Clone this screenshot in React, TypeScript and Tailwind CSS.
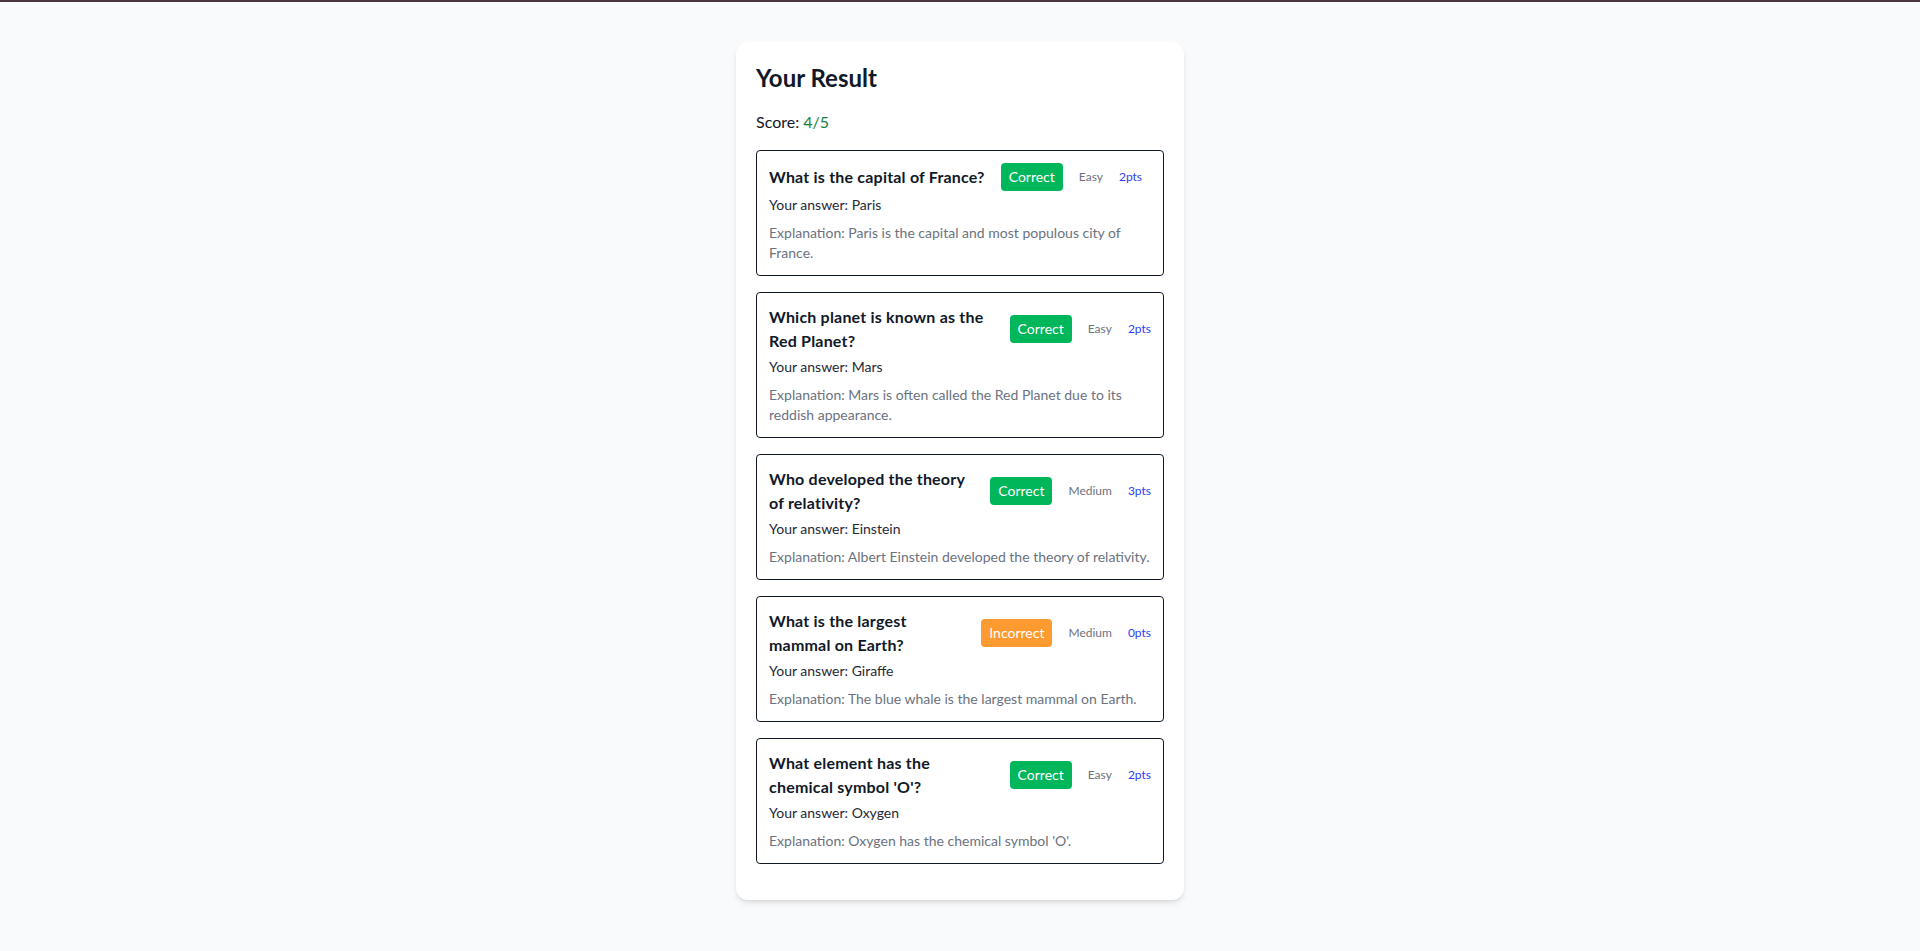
interface Result {
  question: string;
  answer: string;
  explanation: string;
  correct: boolean;
  difficulty: string;
  points: number;
}

const results: Result[] = [
  {
    question: 'What is the capital of France?',
    answer: 'Paris',
    explanation: 'Paris is the capital and most populous city of France.',
    correct: true,
    difficulty: 'Easy',
    points: 2,
  },
  {
    question: 'Which planet is known as the Red Planet?',
    answer: 'Mars',
    explanation: 'Mars is often called the Red Planet due to its reddish appearance.',
    correct: true,
    difficulty: 'Easy',
    points: 2,
  },
  {
    question: 'Who developed the theory of relativity?',
    answer: 'Einstein',
    explanation: 'Albert Einstein developed the theory of relativity.',
    correct: true,
    difficulty: 'Medium',
    points: 3,
  },
  {
    question: 'What is the largest mammal on Earth?',
    answer: 'Giraffe',
    explanation: 'The blue whale is the largest mammal on Earth.',
    correct: false,
    difficulty: 'Medium',
    points: 0,
  },
  {
    question: "What element has the chemical symbol 'O'?",
    answer: 'Oxygen',
    explanation: "Oxygen has the chemical symbol 'O'.",
    correct: true,
    difficulty: 'Easy',
    points: 2,
  },
];

const ResultItem = ({ item }: { item: Result }) => (
  <div className="mb-4 rounded border border-[#111827] p-3">
    <div className="flex items-center gap-4">
      <h3 className="text-base font-bold tracking-[0.2px] text-[#111827]">{item.question}</h3>
      <span
        className={`shrink-0 rounded px-2 py-1 text-sm leading-5 text-white ${
          item.correct ? 'bg-[#00b65b]' : 'bg-[#fd9a30]'
        }`}
      >
        {item.correct ? 'Correct' : 'Incorrect'}
      </span>
      <span className="shrink-0 text-xs text-[#6b7280]">{item.difficulty}</span>
      <span className="shrink-0 text-xs text-[#2f3cf5]">{item.points}pts</span>
    </div>
    <p className="mt-1 text-sm text-[#1f2937]">Your answer: {item.answer}</p>
    <p className="mt-2 text-sm text-[#6b7280]">Explanation: {item.explanation}</p>
  </div>
);

export default function App() {
  const score = results.filter((r) => r.correct).length;

  return (
    <div className="min-h-screen bg-[#f9fafb] font-['Lato',sans-serif]">
      <div className="h-[2px] bg-[#4a3440]" />
      <div className="flex justify-center pt-10 pb-12">
        <div className="w-[448px] rounded-xl bg-white p-5 shadow-md">
          <h2 className="mb-4 text-2xl font-bold text-[#111827]">Your Result</h2>
          <p className="mb-4 text-base text-[#111827]">
            Score: <span className="text-[#15803d]">{score}/{results.length}</span>
          </p>
          {results.map((item) => (
            <ResultItem key={item.question} item={item} />
          ))}
        </div>
      </div>
    </div>
  );
}
